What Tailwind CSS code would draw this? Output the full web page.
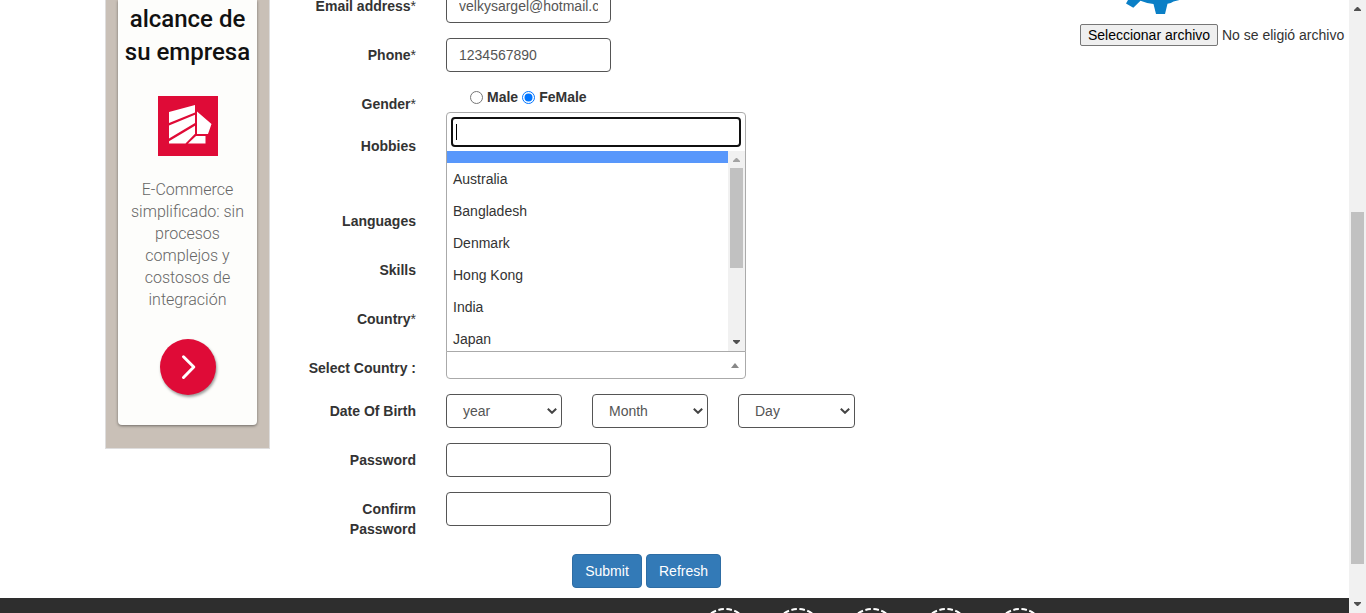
<!DOCTYPE html>
<html lang="en">
<head>
<meta charset="utf-8">
<title>Register</title>
<script src="https://cdn.jsdelivr.net/npm/@tailwindcss/browser@4"></script>
</head>
<body class="h-[613px] overflow-hidden bg-white font-['Liberation_Sans',Arial,sans-serif] text-sm leading-5 text-[#333]">
<div class="flex h-[613px] w-[1366px]">
  <div class="flex w-[1349px] flex-col">
    <main class="flex h-[598px]">
      <!-- Advertisement -->
      <aside class="ml-[105px] h-[449px] w-[165px] shrink-0 border-x border-b border-[#dedddd] bg-[#c9c0b7] px-3 pb-[23px] font-[Roboto,sans-serif]">
        <div class="flex h-[425px] w-[139px] flex-col items-center rounded-b bg-[#fdfdfb] text-center shadow-[0_1px_3px_rgba(0,0,0,0.45)]">
          <h2 class="mt-[3px] whitespace-nowrap text-2xl leading-[33px] font-medium text-[#111]">alcance de<br>su empresa</h2>
          <svg class="mt-[27px] h-[60px] w-[60px] shrink-0" viewBox="0 0 60 60">
            <path fill="#df0b37" d="M0 0h60v60H0z"/>
            <path fill="#fff" d="M11 16 37 9v7.500L11 27zM11 29.500 37 18.800v8.200L11 42.500zM11 45.200 37 29.800v8L27.500 47.500H11zM39 15.500 53.500 28 50 38H39zM38 40h9.500v7.500H30z"/>
          </svg>
          <p class="mt-[23px] text-base leading-[22px] font-light text-[#666]">E-Commerce<br>simplificado: sin<br>procesos<br>complejos y<br>costosos de<br>integración</p>
          <div class="mt-7 flex h-14 w-14 shrink-0 items-center justify-center rounded-full bg-[#df0b37] shadow-[1px_2px_3px_rgba(0,0,0,0.4)]">
            <svg class="h-7 w-7" viewBox="0 0 28 28" fill="none" stroke="#fff" stroke-width="3" stroke-linecap="round" stroke-linejoin="round"><path d="M9.500 3.800 19.800 14 9.500 24.500"/></svg>
          </div>
        </div>
      </aside>

      <!-- Registration form -->
      <form class="-mt-[11px] ml-[31px] w-[740px] shrink-0">
        <div class="flex h-[49px]">
          <label class="w-[115px] pt-[7px] text-right font-bold">Email address<span class="font-normal">*</span></label>
          <div class="ml-[30px] h-[34px] w-[165px] rounded border border-[#555] px-3 py-1.5 text-[#555]"><div class="overflow-hidden whitespace-nowrap">velkysargel@hotmail.com</div></div>
        </div>
        <div class="flex h-[49px]">
          <label class="w-[115px] pt-[7px] text-right font-bold">Phone<span class="font-normal">*</span></label>
          <div class="ml-[30px] h-[34px] w-[165px] rounded border border-[#555] px-3 py-1.5 text-[#555]">1234567890</div>
        </div>
        <div class="flex h-[42px]">
          <label class="w-[115px] pt-[7px] text-right font-bold">Gender<span class="font-normal">*</span></label>
          <div class="ml-[54px] flex h-5 items-center font-bold">
            <svg class="mt-px h-[13px] w-[13px]" viewBox="0 0 13 13"><circle cx="6.500" cy="6.500" r="6" fill="#fff" stroke="#767676"/></svg>
            <span class="ml-1">Male</span>
            <svg class="mt-px ml-1 h-[13px] w-[13px]" viewBox="0 0 13 13"><circle cx="6.500" cy="6.500" r="6" fill="#fff" stroke="#0075ff"/><circle cx="6.500" cy="6.500" r="4" fill="#0075ff"/></svg>
            <span class="ml-1">FeMale</span>
          </div>
        </div>
        <div class="flex h-[75px]"><label class="w-[115px] pt-[7px] text-right font-bold">Hobbies</label></div>
        <div class="flex h-[49px]"><label class="w-[115px] pt-[7px] text-right font-bold">Languages</label></div>
        <div class="flex h-[49px]"><label class="w-[115px] pt-[7px] text-right font-bold">Skills</label></div>
        <div class="flex h-[49px]"><label class="w-[115px] pt-[7px] text-right font-bold">Country<span class="font-normal">*</span></label></div>
        <div class="flex h-[43px]">
          <label class="w-[115px] pt-[7px] text-right font-bold whitespace-nowrap">Select Country :</label>
          <div class="relative ml-[30px] flex h-7 w-[300px] items-center justify-end rounded-b border border-[#aaa] bg-white pr-1.5">
            <svg class="h-[5px] w-2" viewBox="0 0 8 5"><path fill="#888" d="M4 0 8 5H0z"/></svg>
            <!-- Open country list -->
            <div class="absolute -left-px bottom-[26px] flex h-[240px] w-[300px] flex-col rounded-t border border-[#aaa] bg-white">
              <div class="m-1 flex h-[30px] shrink-0 items-center rounded border-2 border-[#101010] bg-white pl-[3px]"><span class="h-4 w-px bg-black"></span></div>
              <div class="flex h-[200px]">
                <ul class="flex-1 overflow-hidden">
                  <li class="h-3 bg-[#5897fb]"></li>
                  <li class="p-1.5">Australia</li>
                  <li class="p-1.5">Bangladesh</li>
                  <li class="p-1.5">Denmark</li>
                  <li class="p-1.5">Hong Kong</li>
                  <li class="p-1.5">India</li>
                  <li class="p-1.5">Japan</li>
                </ul>
                <div class="flex w-[17px] flex-col items-center bg-[#f1f1f1]">
                  <svg class="mt-[7px] h-1 w-[7px]" viewBox="0 0 7 4"><path fill="#a3a3a3" d="M3 0h1l3 3v1H0V3z"/></svg>
                  <div class="mt-1.5 h-[100px] w-[13px] bg-[#c1c1c1]"></div>
                  <svg class="mt-[72px] h-1 w-[7px]" viewBox="0 0 7 4"><path fill="#505050" d="M0 0h7v1L4 4H3L0 1z"/></svg>
                </div>
              </div>
            </div>
          </div>
        </div>
        <div class="flex h-[49px]">
          <label class="w-[115px] pt-[7px] text-right font-bold">Date Of Birth</label>
          <div class="ml-[30px] flex gap-[30px] text-[#555]">
            <div class="flex h-[34px] w-[116px] items-center justify-between rounded border border-[#555] pr-1 pl-4"><span>year</span><svg class="h-1.5 w-2.5" viewBox="0 0 10 6" fill="none" stroke="#444" stroke-width="2"><path d="m.8.8 4.200 4L9.200.8"/></svg></div>
            <div class="flex h-[34px] w-[116px] items-center justify-between rounded border border-[#555] pr-1 pl-4"><span>Month</span><svg class="h-1.5 w-2.5" viewBox="0 0 10 6" fill="none" stroke="#444" stroke-width="2"><path d="m.8.8 4.200 4L9.200.8"/></svg></div>
            <div class="flex h-[34px] w-[117px] items-center justify-between rounded border border-[#555] pr-1 pl-4"><span>Day</span><svg class="h-1.5 w-2.5" viewBox="0 0 10 6" fill="none" stroke="#444" stroke-width="2"><path d="m.8.8 4.200 4L9.200.8"/></svg></div>
          </div>
        </div>
        <div class="flex h-[49px]">
          <label class="w-[115px] pt-[7px] text-right font-bold">Password</label>
          <div class="ml-[30px] h-[34px] w-[165px] rounded border border-[#555]"></div>
        </div>
        <div class="flex h-[62px]">
          <label class="w-[115px] pt-[7px] text-right font-bold">Confirm<br>Password</label>
          <div class="ml-[30px] h-[34px] w-[165px] rounded border border-[#555]"></div>
        </div>
        <div class="ml-[271px] flex gap-1 text-white">
          <div class="h-[34px] w-[70px] rounded border border-[#2e6da4] bg-[#337ab7] py-1.5 text-center">Submit</div>
          <div class="h-[34px] w-[75px] rounded border border-[#2e6da4] bg-[#337ab7] py-1.5 text-center">Refresh</div>
        </div>
      </form>

      <!-- Photo upload -->
      <section class="ml-[39px] flex w-[269px] shrink-0 flex-col whitespace-nowrap">
        <svg class="ml-[45px] h-[14px] w-[56px]" viewBox="0 0 56 14"><path fill="#0a7fc6" d="M3 0 1 3.500 8.300 7.800 15.500.8Q22 3.600 28.500 4L31 14h9l2.500-10.200Q46 3.300 48.500 1.500L54.500 0z"/></svg>
        <div class="mt-2.5 flex items-center">
          <div class="h-[22px] w-[138px] rounded-[2px] border border-[#767676] bg-[#efefef] text-center text-black">Seleccionar archivo</div>
          <span class="ml-1">No se eligió archivo</span>
        </div>
      </section>
    </main>

    <footer class="h-[15px] overflow-hidden bg-[#2e2e2e]">
      <svg class="ml-[700px] h-[15px] w-[350px]" viewBox="0 0 350 15" fill="none" stroke="#fff" stroke-width="2">
        <g stroke-dasharray="5.500 2.500" stroke-dashoffset="3.900">
          <path d="M7.900 17.800A25 25 0 0 1 42.100 17.800"/>
          <path d="M80.900 17.800A25 25 0 0 1 115.100 17.800"/>
          <path d="M154.900 17.800A25 25 0 0 1 189.100 17.800"/>
          <path d="M228.900 17.800A25 25 0 0 1 263.100 17.800"/>
          <path d="M302.900 17.800A25 25 0 0 1 337.100 17.800"/>
        </g>
      </svg>
    </footer>
  </div>

  <!-- Page scrollbar -->
  <div class="flex w-[17px] flex-col items-center bg-[#f1f1f1]">
    <svg class="mt-[7px] h-1 w-[7px]" viewBox="0 0 7 4"><path fill="#505050" d="M3 0h1l3 3v1H0V3z"/></svg>
    <div class="mt-[201px] h-[352px] w-[13px] bg-[#c1c1c1]"></div>
    <svg class="mt-[38px] h-1 w-[7px]" viewBox="0 0 7 4"><path fill="#505050" d="M0 0h7v1L4 4H3L0 1z"/></svg>
  </div>
</div>
</body>
</html>
